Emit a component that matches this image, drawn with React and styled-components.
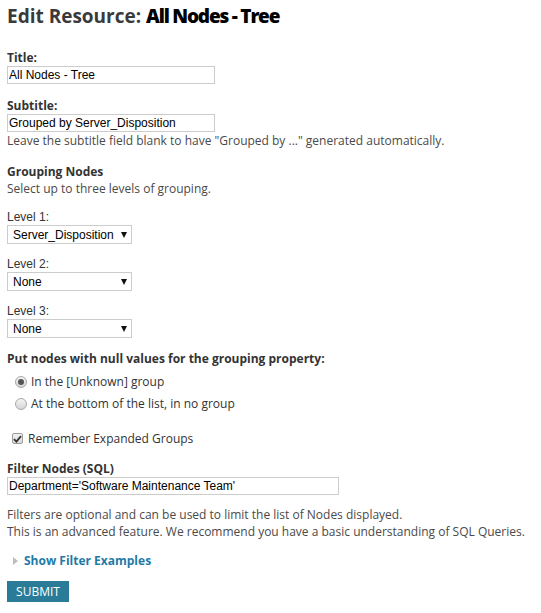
import React from 'react';
import styled, { createGlobalStyle } from 'styled-components';

const GlobalStyle = createGlobalStyle`
  body {
    margin: 0;
    background: #fff;
    font-family: "Open Sans", "Liberation Sans", Arial, sans-serif;
    color: #333;
  }
`;

const Page = styled.div`
  padding: 3px 0 0 7px;
  display: flex;
  flex-direction: column;
  align-items: flex-start;
`;

const Heading = styled.h1`
  margin: 0;
  font-size: 19px;
  line-height: 26px;
  font-weight: 700;
  color: #3a3a3a;
  b {
    color: #000;
    letter-spacing: -1.2px;
  }
`;

// bold labels over the fields
const Label = styled.div`
  margin-top: ${({ $top }) => $top || 0}px;
  font-size: 12px;
  line-height: 17px;
  font-weight: 700;
  color: #333;
`;

const Help = styled.div`
  margin-top: ${({ $top }) => $top || 0}px;
  font-size: 12px;
  line-height: 17px;
  color: #4a4a4a;
`;

const TextInput = styled.input`
  box-sizing: border-box;
  width: ${({ $w }) => $w}px;
  height: 18px;
  margin: 0;
  padding: 0 1px;
  border: 1px solid #ccc;
  font-family: "Liberation Sans", Arial, sans-serif;
  font-size: 12px;
  color: #000;
  outline: none;
`;

const LevelBlock = styled.div`
  margin-top: 12px;
  display: flex;
  flex-direction: column;
  align-items: flex-start;
`;

const LevelLabel = styled.div`
  font-family: "Liberation Sans", Arial, sans-serif;
  font-size: 12px;
  line-height: 16px;
  color: #333;
`;

const SelectBox = styled.div`
  box-sizing: border-box;
  width: 125px;
  height: 19px;
  padding: 0 4px 0 5px;
  border: 1px solid #ccc;
  display: flex;
  align-items: center;
  justify-content: space-between;
  font-family: "Liberation Sans", Arial, sans-serif;
  font-size: 12px;
  color: #000;
`;

const Arrow = styled.span`
  width: 0;
  height: 0;
  border-left: 3px solid transparent;
  border-right: 3px solid transparent;
  border-top: 6px solid #111;
`;

const Radios = styled.div`
  margin-top: 6px;
  display: flex;
  flex-direction: column;
  gap: 5px;
`;

const ChoiceRow = styled.label`
  display: flex;
  align-items: center;
  margin-top: ${({ $top }) => $top || 0}px;
  padding-left: ${({ $indent }) => $indent}px;
  gap: ${({ $gap }) => $gap}px;
  font-size: 12px;
  line-height: 17px;
  color: #333;
`;

const Radio = styled.span`
  box-sizing: border-box;
  width: 12px;
  height: 12px;
  border-radius: 50%;
  border: 1px solid #a8a8a8;
  background: linear-gradient(#f4f4f4, #d6d6d6);
  display: flex;
  align-items: center;
  justify-content: center;
  &::after {
    content: '';
    display: ${({ $checked }) => ($checked ? 'block' : 'none')};
    width: 6px;
    height: 6px;
    border-radius: 50%;
    background: #555;
  }
`;

const Check = styled.span`
  box-sizing: border-box;
  width: 11px;
  height: 11px;
  border: 1px solid #9c9c9c;
  border-radius: 2px;
  background: linear-gradient(#f2f2f2, #d9d9d9);
  display: flex;
  align-items: center;
  justify-content: center;
`;

const Toggle = styled.div`
  margin-top: 12px;
  display: flex;
  align-items: center;
  gap: 6px;
  padding-left: 6px;
  font-size: 12px;
  line-height: 17px;
  font-weight: 700;
  color: #1f7aa5;
`;

const Caret = styled.span`
  width: 0;
  height: 0;
  border-top: 4px solid transparent;
  border-bottom: 4px solid transparent;
  border-left: 5px solid #bdbdbd;
`;

const SubmitButton = styled.button`
  margin-top: 12px;
  width: 62px;
  height: 21px;
  padding: 0;
  border: none;
  background: #297b98;
  color: #fff;
  font-family: "Open Sans", "Liberation Sans", Arial, sans-serif;
  font-size: 12px;
  line-height: 21px;
`;

const levels = ['Server_Disposition', 'None', 'None'];

export default function App() {
  return (
    <>
      <GlobalStyle />
      <Page>
        <Heading>
          Edit Resource: <b>All Nodes - Tree</b>
        </Heading>

        <Label $top={20}>Title:</Label>
        <TextInput $w={208} defaultValue="All Nodes - Tree" />

        <Label $top={13}>Subtitle:</Label>
        <TextInput $w={208} defaultValue="Grouped by Server_Disposition" />
        <Help>Leave the subtitle field blank to have "Grouped by ..." generated automatically.</Help>

        <Label $top={14}>Grouping Nodes</Label>
        <Help>Select up to three levels of grouping.</Help>

        {levels.map((value, i) => (
          <LevelBlock key={i}>
            <LevelLabel>Level {i + 1}:</LevelLabel>
            <SelectBox>
              <span>{value}</span>
              <Arrow />
            </SelectBox>
          </LevelBlock>
        ))}

        <Label $top={12}>Put nodes with null values for the grouping property:</Label>
        <Radios>
          <ChoiceRow $indent={8} $gap={4}>
            <Radio $checked />
            In the [Unknown] group
          </ChoiceRow>
          <ChoiceRow $indent={8} $gap={4}>
            <Radio />
            At the bottom of the list, in no group
          </ChoiceRow>
        </Radios>

        <ChoiceRow $top={18} $indent={5} $gap={5}>
          <Check>
            <svg width="9" height="8" viewBox="0 0 9 8">
              <path d="M1 4.2 L3.4 6.6 L8 1.2" fill="none" stroke="#333" strokeWidth="1.8" />
            </svg>
          </Check>
          Remember Expanded Groups
        </ChoiceRow>

        <Label $top={13}>Filter Nodes (SQL)</Label>
        <TextInput $w={332} defaultValue="Department='Software Maintenance Team'" />

        <Help $top={11}>
          Filters are optional and can be used to limit the list of Nodes displayed.
          <br />
          This is an advanced feature. We recommend you have a basic understanding of SQL Queries.
        </Help>

        <Toggle>
          <Caret />
          Show Filter Examples
        </Toggle>

        <SubmitButton>SUBMIT</SubmitButton>
      </Page>
    </>
  );
}
